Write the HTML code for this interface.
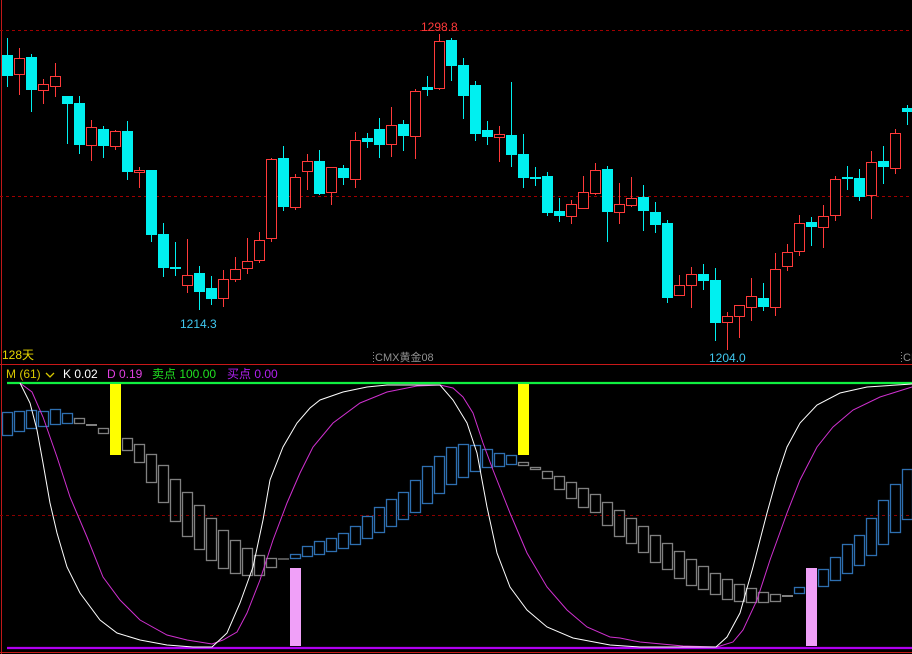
<!DOCTYPE html>
<html><head><meta charset="utf-8"><style>
html,body{margin:0;padding:0;background:#000;}
svg{display:block;}
text{font-family:"Liberation Sans","Noto Sans CJK SC",sans-serif;font-size:12px;}
</style></head><body>
<svg width="912" height="654" viewBox="0 0 912 654" xmlns="http://www.w3.org/2000/svg">
<rect width="912" height="654" fill="#000"/>
<!-- frame -->
<line x1="1.5" y1="0" x2="1.5" y2="654" stroke="#c01818" stroke-width="1"/>
<line x1="0" y1="364.5" x2="912" y2="364.5" stroke="#c81818" stroke-width="1"/>
<line x1="0" y1="652.5" x2="912" y2="652.5" stroke="#c81818" stroke-width="1"/>
<line x1="0" y1="30.5" x2="912" y2="30.5" stroke="#a00000" stroke-dasharray="3,3"/>
<line x1="0" y1="196.5" x2="912" y2="196.5" stroke="#a00000" stroke-dasharray="3,3"/>
<line x1="0" y1="515.5" x2="912" y2="515.5" stroke="#8a0000" stroke-dasharray="3,3"/>

<!-- candles wicks -->
<g stroke-width="1">
<g stroke="#00f0f0">
<line x1="7.5" y1="38" x2="7.5" y2="87"/><line x1="31.5" y1="54" x2="31.5" y2="112"/><line x1="67.5" y1="96" x2="67.5" y2="144"/><line x1="79.5" y1="96" x2="79.5" y2="154"/><line x1="103.5" y1="126" x2="103.5" y2="158"/><line x1="127.5" y1="121" x2="127.5" y2="180"/><line x1="151.5" y1="170" x2="151.5" y2="242"/><line x1="163.5" y1="223" x2="163.5" y2="277"/><line x1="175.5" y1="242" x2="175.5" y2="276"/><line x1="199.5" y1="266" x2="199.5" y2="310"/><line x1="211.5" y1="276" x2="211.5" y2="305"/><line x1="283.5" y1="146" x2="283.5" y2="211"/><line x1="319.5" y1="150" x2="319.5" y2="195"/><line x1="343.5" y1="165" x2="343.5" y2="185"/><line x1="367.5" y1="133" x2="367.5" y2="148"/><line x1="379.5" y1="118" x2="379.5" y2="158"/><line x1="403.5" y1="120" x2="403.5" y2="151"/><line x1="427.5" y1="76" x2="427.5" y2="96"/><line x1="451.5" y1="38" x2="451.5" y2="81"/><line x1="463.5" y1="58" x2="463.5" y2="119"/><line x1="475.5" y1="81" x2="475.5" y2="141"/><line x1="487.5" y1="121" x2="487.5" y2="145"/><line x1="511.5" y1="82" x2="511.5" y2="167"/><line x1="523.5" y1="134" x2="523.5" y2="188"/><line x1="535.5" y1="167" x2="535.5" y2="186"/><line x1="547.5" y1="172" x2="547.5" y2="216"/><line x1="559.5" y1="198" x2="559.5" y2="222"/><line x1="607.5" y1="166" x2="607.5" y2="242"/><line x1="643.5" y1="185" x2="643.5" y2="231"/><line x1="655.5" y1="202" x2="655.5" y2="233"/><line x1="667.5" y1="220" x2="667.5" y2="303"/><line x1="703.5" y1="264" x2="703.5" y2="290"/><line x1="715.5" y1="268" x2="715.5" y2="341"/><line x1="763.5" y1="283" x2="763.5" y2="311"/><line x1="811.5" y1="217" x2="811.5" y2="246"/><line x1="847.5" y1="166" x2="847.5" y2="190"/><line x1="859.5" y1="169" x2="859.5" y2="201"/><line x1="883.5" y1="146" x2="883.5" y2="184"/><line x1="907.5" y1="105" x2="907.5" y2="125"/>
</g>
<g stroke="#ff3a3a">
<line x1="19.5" y1="48" x2="19.5" y2="95"/><line x1="43.5" y1="79" x2="43.5" y2="104"/><line x1="55.5" y1="63" x2="55.5" y2="97"/><line x1="91.5" y1="120" x2="91.5" y2="161"/><line x1="115.5" y1="130" x2="115.5" y2="150"/><line x1="139.5" y1="167" x2="139.5" y2="188"/><line x1="187.5" y1="239" x2="187.5" y2="293"/><line x1="223.5" y1="270" x2="223.5" y2="307"/><line x1="235.5" y1="257" x2="235.5" y2="282"/><line x1="247.5" y1="238" x2="247.5" y2="274"/><line x1="259.5" y1="232" x2="259.5" y2="263"/><line x1="271.5" y1="158" x2="271.5" y2="242"/><line x1="295.5" y1="174" x2="295.5" y2="210"/><line x1="307.5" y1="154" x2="307.5" y2="190"/><line x1="331.5" y1="167" x2="331.5" y2="205"/><line x1="355.5" y1="132" x2="355.5" y2="188"/><line x1="391.5" y1="107" x2="391.5" y2="157"/><line x1="415.5" y1="89" x2="415.5" y2="159"/><line x1="439.5" y1="34" x2="439.5" y2="90"/><line x1="499.5" y1="126" x2="499.5" y2="162"/><line x1="571.5" y1="200" x2="571.5" y2="224"/><line x1="583.5" y1="176" x2="583.5" y2="209"/><line x1="595.5" y1="163" x2="595.5" y2="195"/><line x1="619.5" y1="183" x2="619.5" y2="224"/><line x1="631.5" y1="177" x2="631.5" y2="207"/><line x1="679.5" y1="275" x2="679.5" y2="295"/><line x1="691.5" y1="267" x2="691.5" y2="308"/><line x1="727.5" y1="312" x2="727.5" y2="350"/><line x1="739.5" y1="305" x2="739.5" y2="338"/><line x1="751.5" y1="278" x2="751.5" y2="321"/><line x1="775.5" y1="253" x2="775.5" y2="316"/><line x1="787.5" y1="244" x2="787.5" y2="271"/><line x1="799.5" y1="215" x2="799.5" y2="256"/><line x1="823.5" y1="205" x2="823.5" y2="248"/><line x1="835.5" y1="176" x2="835.5" y2="221"/><line x1="871.5" y1="151" x2="871.5" y2="219"/><line x1="895.5" y1="129" x2="895.5" y2="174"/>
</g>
</g>
<!-- cyan bodies -->
<g fill="#00f0f0">
<rect x="2" y="55" width="11" height="21"/><rect x="26" y="57" width="11" height="33"/><rect x="62" y="96" width="11" height="8"/><rect x="74" y="103" width="11" height="42"/><rect x="98" y="129" width="11" height="17"/><rect x="122" y="131" width="11" height="41"/><rect x="146" y="170" width="11" height="65"/><rect x="158" y="234" width="11" height="34"/><rect x="170" y="267" width="11" height="2"/><rect x="194" y="273" width="11" height="19"/><rect x="206" y="288" width="11" height="11"/><rect x="278" y="158" width="11" height="49"/><rect x="314" y="161" width="11" height="33"/><rect x="338" y="168" width="11" height="10"/><rect x="362" y="138" width="11" height="4"/><rect x="374" y="129" width="11" height="16"/><rect x="398" y="124" width="11" height="12"/><rect x="422" y="87" width="11" height="3"/><rect x="446" y="40" width="11" height="26"/><rect x="458" y="65" width="11" height="31"/><rect x="470" y="85" width="11" height="49"/><rect x="482" y="130" width="11" height="7"/><rect x="506" y="135" width="11" height="20"/><rect x="518" y="154" width="11" height="24"/><rect x="530" y="177" width="11" height="2"/><rect x="542" y="176" width="11" height="37"/><rect x="554" y="211" width="11" height="5"/><rect x="602" y="169" width="11" height="43"/><rect x="638" y="197" width="11" height="14"/><rect x="650" y="212" width="11" height="13"/><rect x="662" y="223" width="11" height="75"/><rect x="698" y="274" width="11" height="7"/><rect x="710" y="280" width="11" height="43"/><rect x="758" y="298" width="11" height="9"/><rect x="806" y="222" width="11" height="5"/><rect x="842" y="177" width="11" height="2"/><rect x="854" y="178" width="11" height="19"/><rect x="878" y="161" width="11" height="6"/><rect x="902" y="108" width="11" height="4"/>
</g>
<!-- red bodies -->
<g fill="#000" stroke="#ff3a3a" stroke-width="1">
<rect x="14.5" y="58.5" width="10" height="16"/><rect x="38.5" y="84.5" width="10" height="6"/><rect x="50.5" y="76.5" width="10" height="10"/><rect x="86.5" y="127.5" width="10" height="18"/><rect x="110.5" y="131.5" width="10" height="15"/><rect x="134.5" y="170.5" width="10" height="2"/><rect x="182.5" y="275.5" width="10" height="10"/><rect x="218.5" y="279.5" width="10" height="19"/><rect x="230.5" y="269.5" width="10" height="10"/><rect x="242.5" y="261.5" width="10" height="7"/><rect x="254.5" y="240.5" width="10" height="20"/><rect x="266.5" y="159.5" width="10" height="79"/><rect x="290.5" y="177.5" width="10" height="30"/><rect x="302.5" y="161.5" width="10" height="10"/><rect x="326.5" y="167.5" width="10" height="25"/><rect x="350.5" y="140.5" width="10" height="39"/><rect x="386.5" y="125.5" width="10" height="19"/><rect x="410.5" y="91.5" width="10" height="45"/><rect x="434.5" y="41.5" width="10" height="47"/><rect x="494.5" y="134.5" width="10" height="3"/><rect x="566.5" y="204.5" width="10" height="12"/><rect x="578.5" y="192.5" width="10" height="16"/><rect x="590.5" y="170.5" width="10" height="23"/><rect x="614.5" y="204.5" width="10" height="8"/><rect x="626.5" y="198.5" width="10" height="7"/><rect x="674.5" y="285.5" width="10" height="10"/><rect x="686.5" y="274.5" width="10" height="11"/><rect x="722.5" y="316.5" width="10" height="6"/><rect x="734.5" y="305.5" width="10" height="11"/><rect x="746.5" y="296.5" width="10" height="11"/><rect x="770.5" y="269.5" width="10" height="38"/><rect x="782.5" y="252.5" width="10" height="14"/><rect x="794.5" y="223.5" width="10" height="28"/><rect x="818.5" y="216.5" width="10" height="11"/><rect x="830.5" y="179.5" width="10" height="36"/><rect x="866.5" y="162.5" width="10" height="33"/><rect x="890.5" y="133.5" width="10" height="35"/>
</g>

<!-- labels upper -->
<text x="421" y="31" fill="#ff3a3a">1298.8</text>
<text x="180" y="328" fill="#40c8f0">1214.3</text>
<text x="709" y="362" fill="#40c8f0">1204.0</text>
<text x="2" y="359" fill="#e8d800">128天</text>
<line x1="373.5" y1="352" x2="373.5" y2="363" stroke="#888" stroke-dasharray="1,2"/>
<text x="375" y="361" fill="#909090" font-size="11" style="font-size:11px">CMX黄金08</text>
<line x1="901.5" y1="352" x2="901.5" y2="363" stroke="#888" stroke-dasharray="1,2"/>
<text x="903" y="361" fill="#909090" style="font-size:11px">CM</text>

<!-- indicator header -->
<text x="6" y="378" fill="#d8c800">M (61)</text>
<path d="M46 373 L50 377 L54 373" fill="none" stroke="#d8c800" stroke-width="1.3"/>
<text x="63" y="378" fill="#ffffff">K 0.02</text>
<text x="107" y="378" fill="#e040e0">D 0.19</text>
<text x="152" y="378" fill="#20e020">卖点 100.00</text>
<text x="227" y="378" fill="#b020f0">买点 0.00</text>

<!-- lower panel lines -->
<line x1="7" y1="383" x2="912" y2="383" stroke="#10f040" stroke-width="2.2"/>
<line x1="7" y1="648" x2="912" y2="648" stroke="#b000f0" stroke-width="2.2"/>

<!-- boxes -->
<g fill="none" stroke="#2e6fb0" stroke-width="1.3">
<rect x="2.5" y="412.5" width="10" height="23"/><rect x="14.5" y="411.5" width="10" height="20"/><rect x="26.5" y="410.5" width="10" height="18"/><rect x="38.5" y="411.5" width="10" height="15"/><rect x="50.5" y="409.5" width="10" height="15"/><rect x="62.5" y="413.5" width="10" height="10"/>
<rect x="290.5" y="554.5" width="10" height="4"/><rect x="302.5" y="546.5" width="10" height="10"/><rect x="314.5" y="541.5" width="10" height="13"/><rect x="326.5" y="538.5" width="10" height="13"/><rect x="338.5" y="533.5" width="10" height="15"/><rect x="350.5" y="526.5" width="10" height="18"/><rect x="362.5" y="516.5" width="10" height="22"/><rect x="374.5" y="507.5" width="10" height="25"/><rect x="386.5" y="499.5" width="10" height="27"/><rect x="398.5" y="492.5" width="10" height="27"/><rect x="410.5" y="480.5" width="10" height="32"/><rect x="422.5" y="466.5" width="10" height="37"/><rect x="434.5" y="456.5" width="10" height="37"/><rect x="446.5" y="447.5" width="10" height="37"/><rect x="458.5" y="444.5" width="10" height="33"/><rect x="470.5" y="445.5" width="10" height="26"/><rect x="482.5" y="449.5" width="10" height="18"/><rect x="494.5" y="453.5" width="10" height="13"/><rect x="506.5" y="455.5" width="10" height="9"/>
<rect x="794.5" y="587.5" width="10" height="6"/><rect x="818.5" y="569.5" width="10" height="17"/><rect x="830.5" y="557.5" width="10" height="23"/><rect x="842.5" y="544.5" width="10" height="29"/><rect x="854.5" y="535.5" width="10" height="30"/><rect x="866.5" y="518.5" width="10" height="37"/><rect x="878.5" y="500.5" width="10" height="44"/><rect x="890.5" y="484.5" width="10" height="48"/><rect x="902.5" y="469.5" width="10" height="50"/>
</g>
<g fill="none" stroke="#808080" stroke-width="1.3">
<rect x="74.5" y="418.5" width="10" height="5"/><line x1="86" y1="425" x2="97" y2="425" stroke-width="2"/><rect x="98.5" y="428.5" width="10" height="5"/>
<rect x="122.5" y="438.5" width="10" height="12"/><rect x="134.5" y="444.5" width="10" height="18"/><rect x="146.5" y="454.5" width="10" height="28"/><rect x="158.5" y="465.5" width="10" height="37"/><rect x="170.5" y="479.5" width="10" height="42"/><rect x="182.5" y="492.5" width="10" height="44"/><rect x="194.5" y="505.5" width="10" height="44"/><rect x="206.5" y="518.5" width="10" height="42"/><rect x="218.5" y="530.5" width="10" height="38"/><rect x="230.5" y="540.5" width="10" height="33"/><rect x="242.5" y="548.5" width="10" height="27"/><rect x="254.5" y="555.5" width="10" height="20"/><rect x="266.5" y="558.5" width="10" height="9"/><line x1="278" y1="559" x2="289" y2="559"/>
<rect x="518.5" y="462.5" width="10" height="3"/><rect x="530.5" y="467.5" width="10" height="2"/><rect x="542.5" y="471.5" width="10" height="7"/><rect x="554.5" y="476.5" width="10" height="13"/><rect x="566.5" y="482.5" width="10" height="16"/><rect x="578.5" y="488.5" width="10" height="19"/><rect x="590.5" y="494.5" width="10" height="18"/><rect x="602.5" y="502.5" width="10" height="23"/><rect x="614.5" y="510.5" width="10" height="26"/><rect x="626.5" y="518.5" width="10" height="25"/><rect x="638.5" y="526.5" width="10" height="26"/><rect x="650.5" y="535.5" width="10" height="27"/><rect x="662.5" y="543.5" width="10" height="26"/><rect x="674.5" y="551.5" width="10" height="27"/><rect x="686.5" y="559.5" width="10" height="26"/><rect x="698.5" y="566.5" width="10" height="23"/><rect x="710.5" y="573.5" width="10" height="21"/><rect x="722.5" y="579.5" width="10" height="20"/><rect x="734.5" y="584.5" width="10" height="17"/><rect x="746.5" y="588.5" width="10" height="14"/><rect x="758.5" y="592.5" width="10" height="10"/><rect x="770.5" y="594.5" width="10" height="7"/><line x1="782" y1="596" x2="793" y2="596" stroke-width="2"/>
</g>
<!-- bars -->
<rect x="110" y="384" width="11" height="71" fill="#ffff00"/>
<rect x="518" y="384" width="11" height="71" fill="#ffff00"/>
<rect x="290" y="568" width="11" height="78" fill="#f0a0f8"/>
<rect x="806" y="568" width="11" height="78" fill="#f0a0f8"/>

<!-- curves -->
<polyline fill="none" stroke="#d030d0" stroke-width="1" points="20,383 32,392 43,417 57,457 70,497 87,537 103,577 120,600 140,620 167,635 187,640 212,644 223,640 237,632 247,613 260,580 273,540 287,503 300,473 313,447 333,423 360,403 387,392 417,386 440,385 453,388 463,397 473,413 483,443 493,470 510,513 527,553 547,587 567,610 587,627 610,637 620,638 640,642 683,646 717,647 733,642 743,630 757,600 770,560 787,513 800,480 817,447 833,427 853,410 880,397 912,387"/>
<polyline fill="none" stroke="#ffffff" stroke-width="1" points="20,383 30,403 37,430 43,463 50,503 57,533 67,567 80,593 100,620 117,633 140,640 167,645 193,647 212,647 227,633 240,603 253,567 263,520 270,480 283,447 297,423 310,408 320,400 343,392 367,387 387,385 440,385 453,400 467,423 477,453 487,507 497,553 510,587 527,610 547,627 573,638 610,645 640,647 716,647 727,637 740,613 753,567 767,513 777,477 787,447 800,423 817,405 840,393 867,387 912,384"/>
</svg>
</body></html>
